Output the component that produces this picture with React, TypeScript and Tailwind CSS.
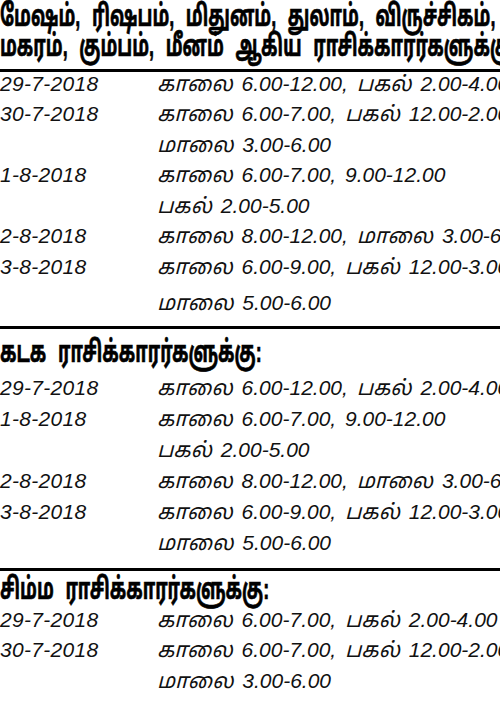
import React from "react";

type Row = { date?: string; time: string; extra?: boolean };

const sec1: Row[] = [
  { date: "29-7-2018", time: "காலை 6.00-12.00, பகல் 2.00-4.00" },
  { date: "30-7-2018", time: "காலை 6.00-7.00, பகல் 12.00-2.00" },
  { time: "மாலை 3.00-6.00" },
  { date: "1-8-2018", time: "காலை 6.00-7.00, 9.00-12.00" },
  { time: "பகல் 2.00-5.00" },
  { date: "2-8-2018", time: "காலை 8.00-12.00, மாலை 3.00-6.00" },
  { date: "3-8-2018", time: "காலை 6.00-9.00, பகல் 12.00-3.00" },
  { time: "மாலை 5.00-6.00", extra: true },
];

const sec2: Row[] = [
  { date: "29-7-2018", time: "காலை 6.00-12.00, பகல் 2.00-4.00" },
  { date: "1-8-2018", time: "காலை 6.00-7.00, 9.00-12.00" },
  { time: "பகல் 2.00-5.00" },
  { date: "2-8-2018", time: "காலை 8.00-12.00, மாலை 3.00-6.00" },
  { date: "3-8-2018", time: "காலை 6.00-9.00, பகல் 12.00-3.00" },
  { time: "மாலை 5.00-6.00" },
];

const sec3: Row[] = [
  { date: "29-7-2018", time: "காலை 6.00-7.00, பகல் 2.00-4.00" },
  { date: "30-7-2018", time: "காலை 6.00-7.00, பகல் 12.00-2.00" },
  { time: "மாலை 3.00-6.00" },
];

const font = { fontFamily: '"Liberation Sans", "Noto Sans Tamil", "Lohit Tamil", "Noto Sans", sans-serif' };

function Rows({ rows, tall }: { rows: Row[]; tall?: boolean }) {
  return (
    <div className="flex flex-col">
      {rows.map((r, i) => (
        <div
          key={i}
          className={`flex items-center whitespace-nowrap italic text-[21px] text-[#111] ${tall ? "h-[31px]" : "h-[30.5px]"} ${r.extra ? "mt-[6px]" : ""}`}
        >
          <div className="w-[157px] shrink-0 tracking-[0.3px]">{r.date ?? ""}</div>
          <div className="whitespace-nowrap [word-spacing:3px]">{r.time}</div>
        </div>
      ))}
    </div>
  );
}

function Head({ children }: { children: React.ReactNode }) {
  return (
    <div className="h-[30px] leading-[30px] whitespace-nowrap">
      <span className="inline-block origin-left scale-x-[0.6] font-bold text-[30px] leading-[30px] [word-spacing:11px] [-webkit-text-stroke:0.7px_black]">
        {children}
      </span>
    </div>
  );
}

export default function App() {
  return (
    <div className="w-[500px] h-[702px] overflow-hidden bg-white text-black" style={font}>
      <div className="pt-[1px]">
        <Head>மேஷம், ரிஷபம், மிதுனம், துலாம், விருச்சிகம், தனுசு,</Head>
        <Head>மகரம், கும்பம், மீனம் ஆகிய ராசிக்காரர்களுக்கு:</Head>
      </div>
      <div className="mt-[8px] h-[3px] bg-black w-[520px]" />
      <div className="mt-[-4px]">
        <Rows rows={sec1} />
      </div>
      <div className="mt-[8px] h-[3px] bg-black w-[520px]" />
      <div className="pt-[8px]">
        <Head>கடக ராசிக்காரர்களுக்கு:</Head>
      </div>
      <div className="mt-[5px]">
        <Rows rows={sec2} tall />
      </div>
      <div className="mt-[10px] h-[3px] bg-black w-[520px]" />
      <div className="pt-[3px]">
        <Head>சிம்ம ராசிக்காரர்களுக்கு:</Head>
      </div>
      <div className="mt-[0px]">
        <Rows rows={sec3} />
      </div>
    </div>
  );
}
